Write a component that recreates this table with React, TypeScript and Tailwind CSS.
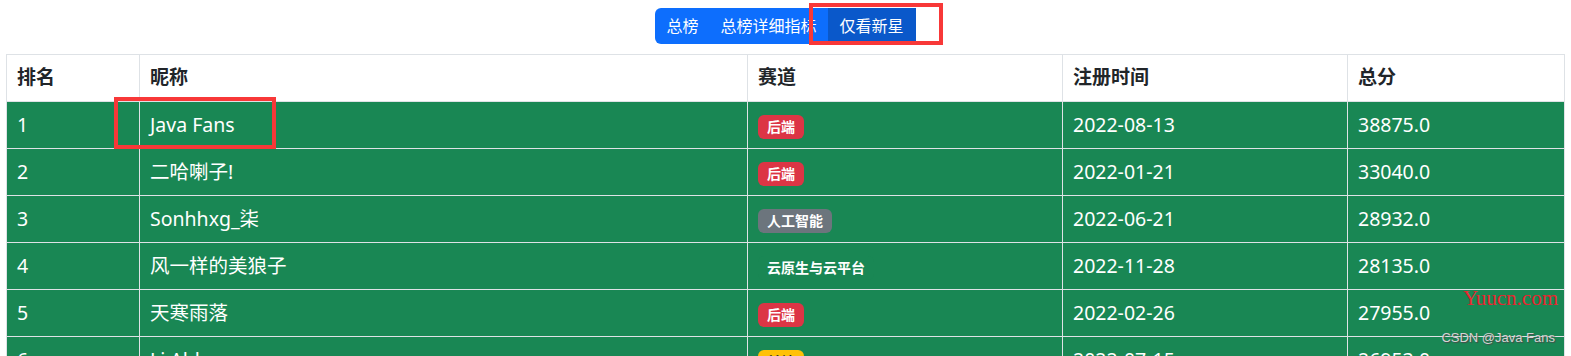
import type { ReactNode } from 'react'

type Track = { label: string; tone: 'danger' | 'secondary' | 'success' | 'warning' }

type Row = {
  rank: number
  name: string
  track: Track
  registered: string
  score: string
}

const rows: Row[] = [
  { rank: 1, name: 'Java Fans', track: { label: '后端', tone: 'danger' }, registered: '2022-08-13', score: '38875.0' },
  { rank: 2, name: '二哈喇子!', track: { label: '后端', tone: 'danger' }, registered: '2022-01-21', score: '33040.0' },
  { rank: 3, name: 'Sonhhxg_柒', track: { label: '人工智能', tone: 'secondary' }, registered: '2022-06-21', score: '28932.0' },
  { rank: 4, name: '风一样的美狼子', track: { label: '云原生与云平台', tone: 'success' }, registered: '2022-11-28', score: '28135.0' },
  { rank: 5, name: '天寒雨落', track: { label: '后端', tone: 'danger' }, registered: '2022-02-26', score: '27955.0' },
  { rank: 6, name: 'Li Ahh', track: { label: '前端', tone: 'warning' }, registered: '2022-07-15', score: '26953.0' },
]

const toneClass: Record<Track['tone'], string> = {
  danger: 'bg-[#dc3545] text-white',
  secondary: 'bg-[#6c757d] text-white',
  success: 'bg-[#198754] text-white',
  warning: 'bg-[#ffc107] text-[#212529]',
}

function Badge({ track }: { track: Track }) {
  return (
    <span
      className={`inline-block rounded-[6px] px-[9px] py-[5px] align-baseline text-[14px] leading-none font-bold ${toneClass[track.tone]}`}
    >
      {track.label}
    </span>
  )
}

function Th({ children, className = '' }: { children: ReactNode; className?: string }) {
  return (
    <th
      className={`border border-[#dee2e6] px-[10px] py-[9px] text-left text-[19px] leading-[27.6px] font-bold text-[#212529] ${className}`}
    >
      {children}
    </th>
  )
}

function Td({ children }: { children: ReactNode }) {
  return (
    <td className="border border-[#dee2e6] px-[10px] py-[9px] text-[19.5px] leading-[27.6px] whitespace-nowrap text-white">
      {children}
    </td>
  )
}

export default function App() {
  return (
    <div
      className="relative bg-white"
      style={{ fontFamily: '"Noto Sans", "Noto Sans CJK SC", sans-serif' }}
    >
      <div className="flex justify-center pt-2 pb-[10px]">
        <div className="flex items-stretch">
          <button
            type="button"
            className="rounded-l-[6px] bg-[#0d6efd] px-[11px] py-[6px] text-[16px] leading-6 text-white"
          >
            总榜
          </button>
          <button
            type="button"
            className="bg-[#0d6efd] px-[11px] py-[6px] text-[16px] leading-6 whitespace-nowrap text-white"
          >
            总榜详细指标
          </button>
          <div className="relative flex">
            <button
              type="button"
              className="bg-[#0a58ca] px-3 py-[6px] text-[16px] leading-6 text-white"
            >
              仅看新星
            </button>
            {/* highlight frame drawn over the active tab */}
            <span className="pointer-events-none absolute top-[-5px] right-[-27px] bottom-[-1px] left-[-19px] border-4 border-[#f83838]">
              <span className="absolute top-0 right-0 bottom-0 w-5 bg-white" />
            </span>
          </div>
        </div>
      </div>

      <div className="px-[6px]">
        <table className="w-full table-fixed border-collapse">
          <thead>
            <tr>
              <Th className="w-[133px]">排名</Th>
              <Th className="w-[608px]">昵称</Th>
              <Th className="w-[315px]">赛道</Th>
              <Th className="w-[285px]">注册时间</Th>
              <Th>总分</Th>
            </tr>
          </thead>
          <tbody>
            {rows.map((row) => (
              <tr key={row.rank} className="bg-[#198754]">
                <Td>{row.rank}</Td>
                <Td>
                  <span className="relative">
                    {row.name}
                    {row.rank === 1 && (
                      <span className="pointer-events-none absolute top-[-14px] right-[-41px] bottom-[-11px] left-[-36px] border-4 border-[#f83838]" />
                    )}
                  </span>
                </Td>
                <Td>
                  <Badge track={row.track} />
                </Td>
                <Td>{row.registered}</Td>
                <Td>{row.score}</Td>
              </tr>
            ))}
          </tbody>
        </table>
      </div>

      <span className="pointer-events-none absolute top-[286px] right-[13px] font-['Liberation_Serif',serif] text-[21px] leading-6 text-[#e8252f]">
        Yuucn.com
      </span>
      <span className="pointer-events-none absolute top-[330px] right-[16px] font-['Liberation_Sans',sans-serif] text-[13px] leading-4 text-[#d4d4d4] [text-shadow:1px_1px_1px_#4a4a4a]">
        CSDN @Java Fans
      </span>
    </div>
  )
}
